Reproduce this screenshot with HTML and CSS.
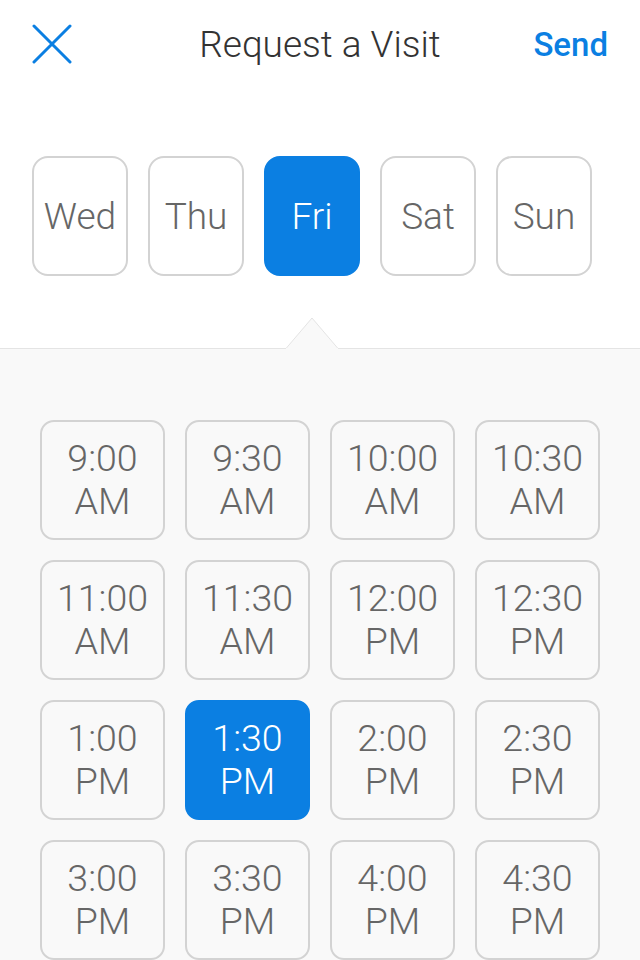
FILE: index.html
```html
<!DOCTYPE html>
<html lang="en">
<head>
  <meta charset="UTF-8" />
  <meta name="viewport" content="width=device-width, initial-scale=1" />
  <title>Request a Visit</title>
  <link rel="stylesheet" href="styles.css">
</head>
<body>
  <header class="topbar">
    <button class="close" aria-label="Close">
      <svg width="40" height="40" viewBox="0 0 40 40"><path d="M2 2 L38 38 M38 2 L2 38" stroke="#0b7fe2" stroke-width="3" stroke-linecap="round" fill="none"/></svg>
    </button>
    <h1 class="title">Request a Visit</h1>
    <a class="send" href="#">Send</a>
  </header>

  <section class="days">
    <button class="day">Wed</button>
    <button class="day">Thu</button>
    <button class="day active">Fri</button>
    <button class="day">Sat</button>
    <button class="day">Sun</button>
  </section>

  <section class="panel">
    <svg class="caret" width="52" height="32" viewBox="0 0 52 32"><path d="M0 31.5 L26 1 L52 31.5 Z" fill="#f9f9f9"/><path d="M0 31.5 L26 1 L52 31.5" fill="none" stroke="#e4e4e4" stroke-width="1"/><rect x="0" y="31" width="52" height="2" fill="#f9f9f9"/></svg>
    <div class="times">
      <button class="slot">9:00<br>AM</button>
      <button class="slot">9:30<br>AM</button>
      <button class="slot">10:00<br>AM</button>
      <button class="slot">10:30<br>AM</button>
      <button class="slot">11:00<br>AM</button>
      <button class="slot">11:30<br>AM</button>
      <button class="slot">12:00<br>PM</button>
      <button class="slot">12:30<br>PM</button>
      <button class="slot">1:00<br>PM</button>
      <button class="slot active">1:30<br>PM</button>
      <button class="slot">2:00<br>PM</button>
      <button class="slot">2:30<br>PM</button>
      <button class="slot">3:00<br>PM</button>
      <button class="slot">3:30<br>PM</button>
      <button class="slot">4:00<br>PM</button>
      <button class="slot">4:30<br>PM</button>
    </div>
  </section>
</body>
</html>
```

FILE: styles.css
```css
body { margin: 0; width: 640px; height: 960px; overflow: hidden; background: #fff; font-family: Roboto, "Noto Sans", sans-serif; color: #333; }
button { font-family: inherit; cursor: pointer; }

.topbar { height: 88px; display: grid; grid-template-columns: 1fr auto 1fr; align-items: center; padding: 0 32px; }
.close { justify-self: start; background: none; border: 0; padding: 0; width: 40px; height: 40px; display: flex; }
.title { margin: 0; font-size: 37px; font-weight: 300; color: #333; }
.send { justify-self: end; color: #0b7fe2; font-size: 33px; font-weight: 500; text-decoration: none; }

.days { display: flex; gap: 20px; padding: 68px 32px 72px; }
.day { width: 96px; height: 120px; border: 2px solid #d3d3d3; border-radius: 16px; background: #fff; color: #666; font-size: 37px; font-weight: 300; padding: 0; }
.day.active { background: #0b7fe2; border-color: #0b7fe2; color: #fff; }

.panel { position: relative; background: #f9f9f9; border-top: 1px solid #e4e4e4; padding: 71px 40px 0; }
.caret { position: absolute; left: 286px; top: -32px; }

.times { display: grid; grid-template-columns: repeat(4, 125px); grid-auto-rows: 120px; gap: 20px; }
.slot { border: 2px solid #d3d3d3; border-radius: 14px; background: #f9f9f9; color: #666; font-size: 37.5px; font-weight: 300; line-height: 43px; padding: 0; }
.slot.active { background: #0b7fe2; border-color: #0b7fe2; color: #fff; }
```
